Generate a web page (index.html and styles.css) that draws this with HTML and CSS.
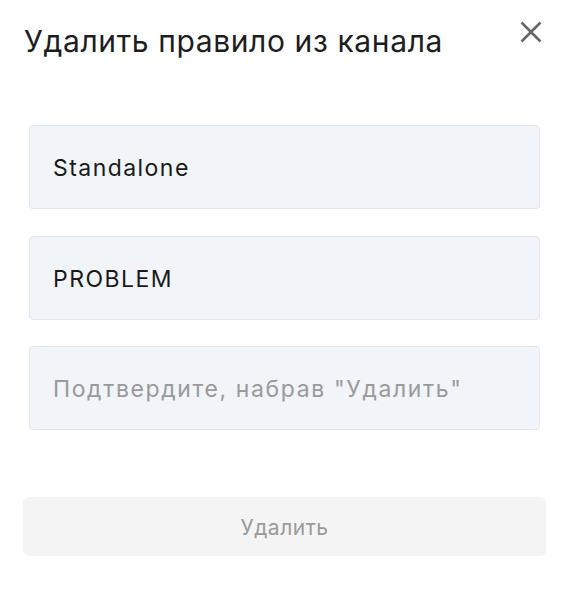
FILE: index.html
```html
<!DOCTYPE html>
<html lang="ru">
<head>
<meta charset="utf-8">
<link rel="stylesheet" href="styles.css">
</head>
<body>
<div class="dialog">
  <div class="header">
    <h1 class="title">Удалить правило из канала</h1>
    <button class="close" aria-label="Закрыть">
      <svg width="22" height="22" viewBox="0 0 22 22"><path d="M1.5 1.5 L20.5 20.5 M20.5 1.5 L1.5 20.5" stroke="#666" stroke-width="2.5" fill="none"/></svg>
    </button>
  </div>
  <div class="fields">
    <div class="field">Standalone</div>
    <div class="field">PROBLEM</div>
    <div class="field placeholder">Подтвердите, набрав "Удалить"</div>
  </div>
  <button class="submit" disabled>Удалить</button>
</div>
</body>
</html>
```
FILE: styles.css
```css
html, body { margin: 0; padding: 0; background: #fff; }
body { font-family: Inter, "Noto Sans", sans-serif; color: #1a1a1a; }
.dialog { padding: 0 28px 0 23px; display: flex; flex-direction: column; }
.header { display: flex; justify-content: space-between; align-items: flex-start; height: 125px; }
.title { margin: 23px 0 0 1px; font-size: 30px; font-weight: 400; line-height: 36px; letter-spacing: 0.62px; color: #1d1d1f; }
.close { margin: 21px 4px 0 0; padding: 0; border: 0; background: none; width: 22px; height: 22px; }
.close svg { display: block; }
.fields { display: flex; flex-direction: column; gap: 26.5px; margin: 0 6px; }
.field { height: 80px; border: 1px solid #e3e6ec; background: #f1f4f9; border-radius: 4px; box-sizing: content-box; display: flex; align-items: center; padding: 2px 23px 0; font-size: 23px; letter-spacing: 1.45px; color: #1a1a1a; }
.placeholder { color: #9a9a9a; letter-spacing: 1.62px; }
.submit { margin-top: 67px; height: 59px; border: 0; border-radius: 6px; background: #f4f4f4; color: #9a9a9a; font-family: Inter, sans-serif; font-size: 21px; letter-spacing: 0.5px; padding: 2px 0 0; }
```
